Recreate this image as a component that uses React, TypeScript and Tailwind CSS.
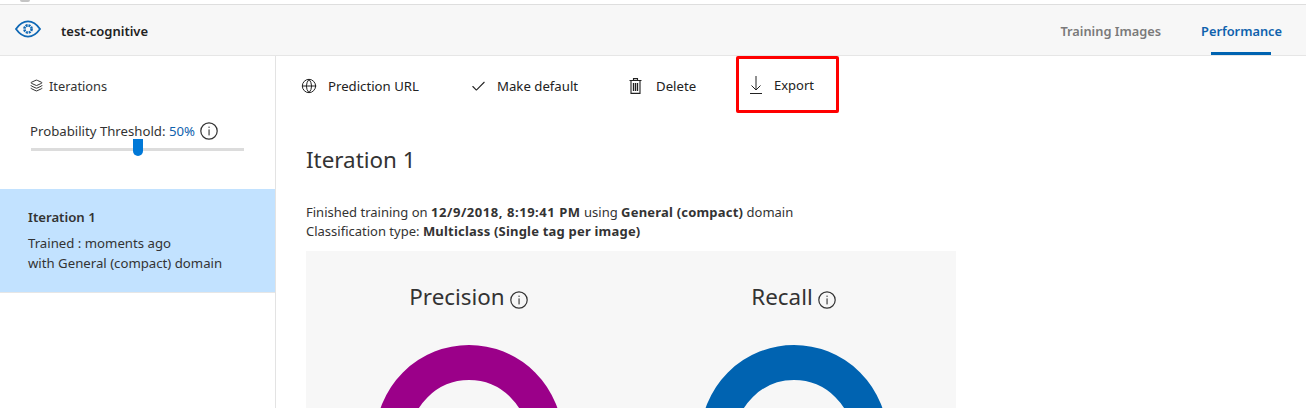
import React from "react";
import { Globe, Check, Layers } from "lucide-react";

function Info({ size = 18 }: { size?: number }) {
  return (
    <svg width={size} height={size} viewBox="0 0 18 18" fill="none" className="shrink-0">
      <circle cx="9" cy="9" r="8.2" stroke="#333" strokeWidth="1.2" />
      <rect x="8.5" y="4.6" width="1.1" height="1.3" fill="#333" />
      <rect x="8.5" y="7.4" width="1.1" height="6" fill="#333" />
    </svg>
  );
}

function Eye() {
  return (
    <svg width="26" height="18" viewBox="0 0 26 18" fill="none">
      <path d="M1 9C4.5 4 8.5 1.4 13 1.4S21.5 4 25 9c-3.5 5-7.5 7.600-12 7.600S4.500 14 1 9Z" stroke="#0f68b5" strokeWidth="1.8" />
      <circle cx="13" cy="9" r="3.6" stroke="#0f68b5" strokeWidth="2.6" strokeDasharray="2 0.83" />
    </svg>
  );
}

function Bin() {
  return (
    <svg width="13" height="16" viewBox="0 0 13 16" fill="none" stroke="#222" strokeWidth="1.1" className="mr-[14px]">
      <path d="M4.500 2V.6h4V2M.5 2.500h12M2 2.500v12.900h9V2.500" />
      <path d="M4.500 5v8M6.500 5v8M8.500 5v8" strokeWidth="1.3" />
    </svg>
  );
}

function Download() {
  return (
    <svg width="14" height="20" viewBox="0 0 14 20" fill="none" stroke="#222" strokeWidth="1" className="mr-[10px] -ml-[1px]">
      <path d="M7 1v14M2.500 10.500 7 15l4.500-4.500M1 18.500h12" />
    </svg>
  );
}

function Donut({ color }: { color: string }) {
  return (
    <svg width="190" height="63" viewBox="0 0 190 63" className="block">
      <circle cx="95" cy="93.500" r="76" fill="none" stroke={color} strokeWidth="35" />
    </svg>
  );
}

function Action({ icon, label, className }: { icon: React.ReactNode; label: string; className: string }) {
  return (
    <div className={`flex items-center ${className}`}>
      {icon}
      <span>{label}</span>
    </div>
  );
}

export default function App() {
  return (
    <div className="relative h-[408px] w-[1306px] overflow-hidden bg-white text-[13.2px] leading-[20px] text-[#333]" style={{ fontFamily: '"Noto Sans", sans-serif' }}>
      <div className="absolute left-[20px] top-0 h-[2px] w-[10px] rounded-b-full bg-[#c4c4c4]" />
      <div className="h-[5px] border-b border-[#dedede]" />
      <header className="flex h-[51px] items-center justify-between border-b border-[#e6e6e6] bg-[#f7f7f7]">
        <div className="flex items-center pl-[15px]">
          <span className="-mt-[3px]"><Eye /></span>
          <span className="ml-[20px] pt-[1px] text-[13px] font-semibold text-[#222]">test-cognitive</span>
        </div>
        <nav className="flex h-full items-center pr-[24px] text-[12.8px] font-semibold">
          <span className="pt-[2px] text-[#7a7a7a]">Training Images</span>
          <div className="relative ml-[40px] flex h-full items-center pt-[2px] text-[#0f62ad]">
            Performance
            <div className="absolute bottom-0 left-[10px] h-[3px] w-[60px] bg-[#0063b1]" />
          </div>
        </nav>
      </header>
      <div className="flex">
        <aside className="h-[352px] w-[276px] shrink-0 border-r border-[#e3e3e3]">
          <div className="flex items-center gap-[6px] pl-[30px] pt-[20px]">
            <Layers size={13} strokeWidth={1.7} className="-mt-[2px] text-[#222]" />
            <span className="text-[12.800px]">Iterations</span>
          </div>
          <div className="mt-[25px] flex items-center pl-[30px]">
            <span>Probability Threshold:&nbsp;</span>
            <span className="text-[#0f62ad]">50%</span>
            <span className="ml-[5px]"><Info /></span>
          </div>
          <div className="relative ml-[31px] mt-[7px] h-[3px] w-[213px] bg-[#dcdcdc]">
            <div className="absolute left-[102px] top-[-9px] h-[17px] w-[10px] rounded-b-[5px] bg-[#0078d7]" />
          </div>
          <div className="mt-[38px] h-[104px] border-b border-[#e6e6e6] bg-[#c2e2ff] pl-[28px] pt-[18px]">
            <div className="font-semibold">Iteration 1</div>
            <div className="mt-[6px]">Trained : moments ago</div>
            <div>with General (compact) domain</div>
          </div>
        </aside>
        <main className="min-w-0 flex-1 pl-[30px]">
          <div className="flex h-[60px] items-center text-[#222]">
            <Action className="w-[169px] -ml-[5px]" label="Prediction URL" icon={<Globe size={16} strokeWidth={1.5} className="mr-[11px]" />} />
            <Action className="w-[159px]" label="Make default" icon={<Check size={17} strokeWidth={1.5} className="mr-[10px]" />} />
            <Action className="w-[107px]" label="Delete" icon={<Bin />} />
            <div className="flex h-[57px] w-[103px] items-center self-start rounded-[2px] border-[3px] border-[#ff0000] pl-[11px]">
              <Download />
              <span className="ml-[1px] mt-[1px] text-[13px]">Export</span>
            </div>
          </div>
          <h1 className="mt-[28px] text-[22.4px] leading-[32px] text-[#333]">Iteration 1</h1>
          <p className="mt-[27px] text-[13px] leading-[19px]">
            Finished training on <b className="font-bold tracking-[0.55px]">12/9/2018, 8:19:41 PM</b> using <b className="font-bold tracking-[0.2px]">General (compact)</b> domain
            <br />
            Classification type: <b className="font-bold tracking-[0.2px]">Multiclass (Single tag per image)</b>
          </p>
          <section className="mt-[10px] grid h-[157px] w-[650px] grid-cols-2 bg-[#f7f7f7]">
            {[["Precision", "#9b0089"], ["Recall", "#0063b1"]].map(([name, color]) => (
              <div key={name} className="flex flex-col items-center pt-[30px]">
                <div className="flex h-[32px] items-center gap-[5px] text-[22.400px] leading-[32px]">
                  <span>{name}</span>
                  <span className="mt-[5px]"><Info /></span>
                </div>
                <div className="mt-[32px]"><Donut color={color} /></div>
              </div>
            ))}
          </section>
        </main>
      </div>
    </div>
  );
}
